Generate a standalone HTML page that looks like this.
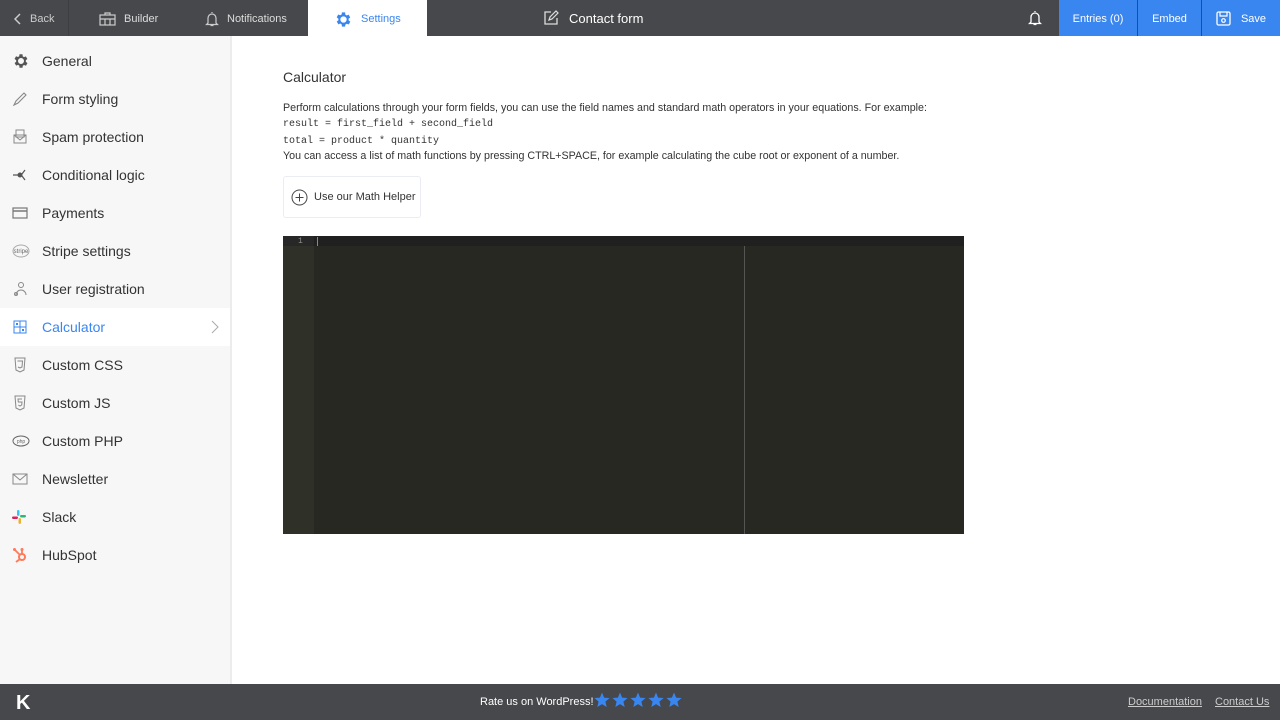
<!DOCTYPE html>
<html><head><meta charset="utf-8"><style>
*{margin:0;padding:0;box-sizing:border-box}
body{width:1280px;height:720px;overflow:hidden;font-family:"Liberation Sans",sans-serif;background:#fff;position:relative;color:#333}
.top{position:absolute;top:0;left:0;width:1280px;height:36px;background:#46484b;color:#ddd;font-size:11px}
.top .it{position:absolute;top:0;height:36px;display:flex;align-items:center;gap:8px}
.sep{position:absolute;top:0;width:1px;height:36px;background:#3d3f42}
.blue{position:absolute;top:0;height:36px;background:#3a86f0;color:#fff;display:flex;align-items:center;justify-content:center;font-size:11px}
.side{position:absolute;top:36px;left:0;width:232px;height:648px;background:#f7f7f7;border-right:2px solid #ececec}
.si{position:absolute;left:0;width:230px;height:38px;display:flex;align-items:center;font-size:14px;color:#333}
.si svg{position:absolute;left:12px}
.si span{position:absolute;left:42px}
.foot{position:absolute;top:684px;left:0;width:1280px;height:36px;background:#46484b;color:#fff;font-size:11px}
</style></head><body>
<div class="top">
 <div class="it" style="left:14px;color:#ccc;top:1px"><svg width="8" height="12" viewBox="0 0 8 12"><path d="M6 1L1 6l5 5" stroke="#ccc" stroke-width="1.5" fill="none"/></svg>Back</div>
 <div class="sep" style="left:68px"></div>
 <div class="it" style="left:99px;top:1px"><svg width="17" height="14" viewBox="0 0 17 14"><rect x="1" y="3" width="15" height="10" fill="none" stroke="#ccc" stroke-width="1.2"/><path d="M1 7h15M6 3V1h5v2M6 7v6M11 7v6" stroke="#ccc" stroke-width="1.2" fill="none"/></svg><span>Builder</span></div>
 <div class="it" style="left:205px;top:1px"><svg width="14" height="16" viewBox="0 0 14 16"><path d="M7 1v1M3 12V7a4 4 0 0 1 8 0v5l1.5 1.5h-11zM5.5 14.5h3" stroke="#ccc" stroke-width="1.2" fill="none"/></svg>Notifications</div>
 <div style="position:absolute;left:308px;top:0;width:119px;height:36px;background:#fff"></div>
 <div class="it" style="left:334px;color:#3a86f0;top:1px"><svg width="19" height="19" viewBox="0 0 24 24"><path fill="#3a86f0" d="M19.4 13a7.5 7.5 0 0 0 0-2l2.1-1.6-2-3.5-2.5 1a7 7 0 0 0-1.7-1L15 3h-4l-.4 2.7a7 7 0 0 0-1.7 1l-2.5-1-2 3.5L6.6 11a7.5 7.5 0 0 0 0 2l-2.1 1.6 2 3.5 2.5-1a7 7 0 0 0 1.7 1L11 21h4l.4-2.7a7 7 0 0 0 1.7-1l2.5 1 2-3.5zM13 16a4 4 0 1 1 0-8 4 4 0 0 1 0 8z" transform="translate(-1 0)"/></svg>Settings</div>
 <div class="it" style="left:543px;color:#fff;font-size:13px;gap:10px"><svg width="16" height="16" viewBox="0 0 16 16"><path d="M8 2H2v12h12V8" stroke="#ddd" stroke-width="1.3" fill="none"/><path d="M6 10l1-3 6-6 2 2-6 6z" stroke="#ddd" stroke-width="1.2" fill="none"/></svg>Contact form</div>
 <div class="it" style="left:1028px"><svg width="14" height="16" viewBox="0 0 14 16"><path d="M7 1v1M3 12V7a4 4 0 0 1 8 0v5l1.5 1.5h-11zM5.5 14.5h3" stroke="#fff" stroke-width="1.3" fill="none"/></svg></div>
 <div class="blue" style="left:1059px;width:78px;padding-top:1px">Entries (0)</div>
 <div class="blue" style="left:1138px;width:63px;padding-top:1px">Embed</div>
 <div class="blue" style="left:1202px;width:78px;gap:10px;padding-top:1px"><svg width="15" height="15" viewBox="0 0 15 15"><rect x="1" y="1" width="13" height="13" rx="1.5" fill="none" stroke="#fff" stroke-width="1.3"/><path d="M4 1v4h7V1" stroke="#fff" stroke-width="1.2" fill="none"/><circle cx="7.5" cy="9.5" r="1.8" fill="none" stroke="#fff" stroke-width="1.2"/></svg>Save</div>
</div>

<div class="side">
 <div class="si" style="top:6px"><svg width="18" height="18" viewBox="0 0 24 24"><path fill="#555" d="M19.4 13a7.5 7.5 0 0 0 0-2l2.1-1.6-2-3.5-2.5 1a7 7 0 0 0-1.7-1L15 3h-4l-.4 2.7a7 7 0 0 0-1.7 1l-2.5-1-2 3.5L6.6 11a7.5 7.5 0 0 0 0 2l-2.1 1.6 2 3.5 2.5-1a7 7 0 0 0 1.7 1L11 21h4l.4-2.7a7 7 0 0 0 1.7-1l2.5 1 2-3.5zM13 16a4 4 0 1 1 0-8 4 4 0 0 1 0 8z" transform="translate(-1 0)"/></svg><span>General</span></div>
 <div class="si" style="top:44px"><svg width="16" height="16" viewBox="0 0 16 16"><path d="M2 14l2-4 8-8 2 2-8 8z" stroke="#888" stroke-width="1.1" fill="none"/></svg><span>Form styling</span></div>
 <div class="si" style="top:82px"><svg width="16" height="16" viewBox="0 0 16 16"><rect x="2" y="6" width="12" height="8" fill="none" stroke="#888"/><rect x="4" y="1" width="8" height="7" fill="none" stroke="#888"/><path d="M2 6l6 5 6-5" stroke="#888" fill="none"/></svg><span>Spam protection</span></div>
 <div class="si" style="top:120px"><svg width="16" height="16" viewBox="0 0 16 16"><circle cx="8" cy="8" r="2.5" fill="#555"/><path d="M1 8h5M10 7l3-4M10 9l3 4" stroke="#555" stroke-width="1.2"/></svg><span>Conditional logic</span></div>
 <div class="si" style="top:158px"><svg width="16" height="16" viewBox="0 0 16 16"><rect x="1" y="3" width="14" height="10" fill="none" stroke="#777" stroke-width="1.2"/><path d="M1 6h14" stroke="#777" stroke-width="1.5"/></svg><span>Payments</span></div>
 <div class="si" style="top:196px"><svg width="18" height="16" viewBox="0 0 18 16"><ellipse cx="9" cy="8" rx="8" ry="6" fill="none" stroke="#aaa"/><text x="9" y="10" font-size="6" text-anchor="middle" fill="#666" font-family="Liberation Sans">stripe</text></svg><span>Stripe settings</span></div>
 <div class="si" style="top:234px"><svg width="16" height="16" viewBox="0 0 16 16"><circle cx="9" cy="4" r="2.5" fill="none" stroke="#888"/><path d="M4 14a5 5 0 0 1 10 0" stroke="#888" fill="none"/><circle cx="4" cy="13" r="1.5" fill="none" stroke="#888"/></svg><span>User registration</span></div>
 <div class="si" style="top:272px;background:#fff;color:#3a86f0"><svg width="16" height="16" viewBox="0 0 16 16"><rect x="2" y="2" width="12" height="12" fill="none" stroke="#3a86f0"/><path d="M8 2v12M2 8h12" stroke="#3a86f0"/><rect x="4" y="4" width="2" height="2" fill="#3a86f0"/><rect x="10" y="10" width="2" height="2" fill="#3a86f0"/></svg><span>Calculator</span><svg style="left:211px" width="8" height="14" viewBox="0 0 8 14"><path d="M1 1l6 6-6 6" stroke="#aaa" fill="none"/></svg></div>
 <div class="si" style="top:310px"><svg width="16" height="16" viewBox="0 0 16 16"><path d="M3 1h10l-1 12-4 2-4-2z" fill="none" stroke="#888"/><path d="M5.5 4h5l-.5 6-2 1-2-1" fill="none" stroke="#888"/></svg><span>Custom CSS</span></div>
 <div class="si" style="top:348px"><svg width="16" height="16" viewBox="0 0 16 16"><path d="M3 1h10l-1 12-4 2-4-2z" fill="none" stroke="#888"/><path d="M10 4H6l.3 3H10l-.3 3-1.7 1-1.7-1" fill="none" stroke="#888"/></svg><span>Custom JS</span></div>
 <div class="si" style="top:386px"><svg width="18" height="12" viewBox="0 0 18 12"><ellipse cx="9" cy="6" rx="8" ry="5" fill="none" stroke="#666"/><text x="9" y="8" font-size="5" text-anchor="middle" fill="#666">php</text></svg><span>Custom PHP</span></div>
 <div class="si" style="top:424px"><svg width="16" height="16" viewBox="0 0 16 16"><rect x="1" y="3" width="14" height="10" fill="none" stroke="#888"/><path d="M1 3l7 6 7-6" stroke="#888" fill="none"/></svg><span>Newsletter</span></div>
 <div class="si" style="top:462px"><svg width="14" height="14" viewBox="0 0 14 14"><rect x="5" y="0" width="2.5" height="6" rx="1.2" fill="#36c5f0"/><rect x="8" y="5" width="6" height="2.5" rx="1.2" fill="#2eb67d"/><rect x="6.5" y="8" width="2.5" height="6" rx="1.2" fill="#ecb22e"/><rect x="0" y="6.5" width="6" height="2.5" rx="1.2" fill="#e01e5a"/></svg><span>Slack</span></div>
 <div class="si" style="top:500px"><svg width="16" height="16" viewBox="0 0 16 16"><circle cx="10" cy="10" r="3" fill="none" stroke="#ff7a59" stroke-width="2"/><path d="M10 7V3M3 3l5 5M4 15l4-3" stroke="#ff7a59" stroke-width="1.8"/><circle cx="10" cy="2.5" r="1.5" fill="#ff7a59"/><circle cx="2.5" cy="2.5" r="1.5" fill="#ff7a59"/></svg><span>HubSpot</span></div>
</div>

<div style="position:absolute;left:283px;top:69px;font-size:14px;color:#333">Calculator</div>
<div style="position:absolute;left:283px;top:101px;font-size:10.7px;line-height:15.3px;color:#333">
Perform calculations through your form fields, you can use the field names and standard math operators in your equations. For example:<br>
<span style="font-family:'Liberation Mono',monospace;font-size:10px">result = first_field + second_field</span><br>
<span style="font-family:'Liberation Mono',monospace;font-size:10px">total = product * quantity</span><br>
You can access a list of math functions by pressing CTRL+SPACE, for example calculating the cube root or exponent of a number.</div>
<div style="position:absolute;left:283px;top:176px;width:138px;height:42px;border:1px solid #ececf4;border-radius:3px;display:flex;align-items:center;font-size:11px;color:#333"><svg style="margin-left:7px;margin-right:6px" width="17" height="17" viewBox="0 0 17 17"><circle cx="8.5" cy="8.5" r="7.5" fill="none" stroke="#444"/><path d="M8.5 4.5v8M4.5 8.5h8" stroke="#444"/></svg>Use our Math Helper</div>

<div style="position:absolute;left:283px;top:236px;width:681px;height:298px;background:#272822">
 <div style="position:absolute;left:0;top:0;width:31px;height:298px;background:#2f3129"></div>
 <div style="position:absolute;left:31px;top:0;width:650px;height:10px;background:#202020"></div>
 <div style="position:absolute;left:0;top:0;width:31px;height:10px;background:#272727"></div>
 <div style="position:absolute;left:15px;top:1px;font-size:8px;line-height:9px;color:#8f908a;font-family:'Liberation Mono',monospace">1</div>
 <div style="position:absolute;left:34px;top:1px;width:1px;height:9px;background:#888"></div>
 <div style="position:absolute;left:461px;top:10px;width:1px;height:288px;background:#555"></div>
</div>

<div class="foot">
 <div style="position:absolute;left:16px;top:8px;font-size:20px;font-weight:bold;color:#fff">K</div>
 <div style="position:absolute;left:480px;top:12px">Rate us on WordPress!</div>
 <svg style="position:absolute;left:594px;top:8px" width="90" height="17" viewBox="0 0 90 17">
  <defs></defs>
  <g fill="#3a86f0">
   <polygon points="8,0.5 10.1,5.6 15.6,6 11.4,9.6 12.7,15 8,12.1 3.3,15 4.6,9.6 0.4,6 5.9,5.6"/>
   <polygon transform="translate(18 0)" points="8,0.5 10.1,5.6 15.6,6 11.4,9.6 12.7,15 8,12.1 3.3,15 4.6,9.6 0.4,6 5.9,5.6"/>
   <polygon transform="translate(36 0)" points="8,0.5 10.1,5.6 15.6,6 11.4,9.6 12.7,15 8,12.1 3.3,15 4.6,9.6 0.4,6 5.9,5.6"/>
   <polygon transform="translate(54 0)" points="8,0.5 10.1,5.6 15.6,6 11.4,9.6 12.7,15 8,12.1 3.3,15 4.6,9.6 0.4,6 5.9,5.6"/>
   <polygon transform="translate(72 0)" points="8,0.5 10.1,5.6 15.6,6 11.4,9.6 12.7,15 8,12.1 3.3,15 4.6,9.6 0.4,6 5.9,5.6"/>
  </g>
 </svg>
 <div style="position:absolute;left:1128px;top:12px;color:#ccc;text-decoration:underline">Documentation</div>
 <div style="position:absolute;left:1215px;top:12px;color:#ccc;text-decoration:underline">Contact Us</div>
</div>
</body></html>
